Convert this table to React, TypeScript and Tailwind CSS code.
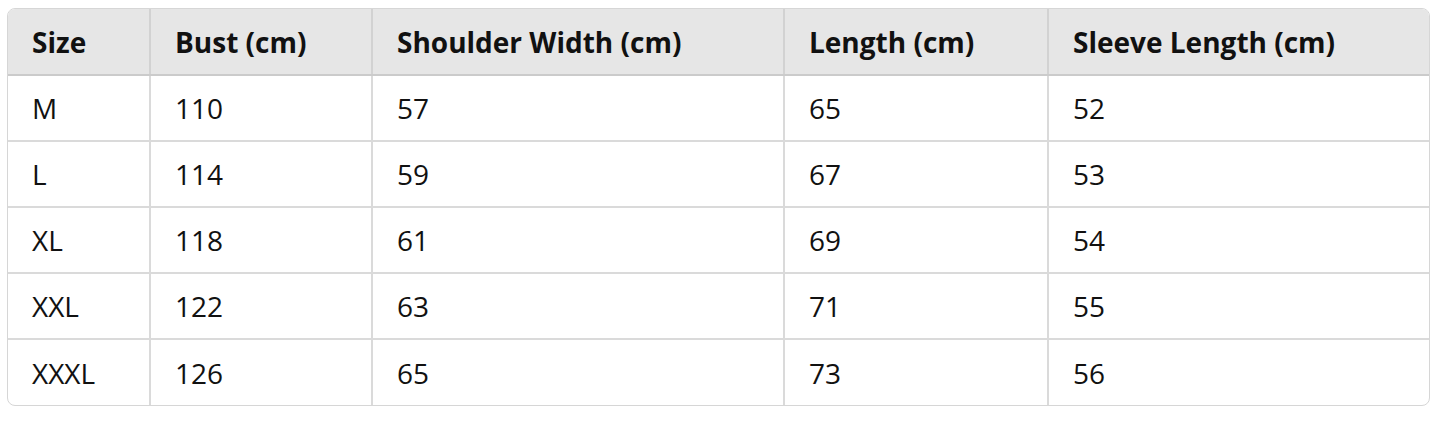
import React from "react";

const headers = ["Size", "Bust (cm)", "Shoulder Width (cm)", "Length (cm)", "Sleeve Length (cm)"];

const rows = [
  ["M", "110", "57", "65", "52"],
  ["L", "114", "59", "67", "53"],
  ["XL", "118", "61", "69", "54"],
  ["XXL", "122", "63", "71", "55"],
  ["XXXL", "126", "65", "73", "56"],
];

const widths = ["w-[142px]", "w-[222px]", "w-[412px]", "w-[264px]", "w-[382px]"];

export default function App() {
  return (
    <div className="min-h-screen bg-white pt-2 pl-[7px] font-['Open_Sans',sans-serif] text-[#111]">
      <div className="w-[1423px] rounded-lg border border-[#d6d6d6] overflow-hidden">
        <table className="w-full table-fixed border-collapse">
          <colgroup>
            {widths.map((w, i) => (
              <col key={i} className={w} />
            ))}
          </colgroup>
          <thead>
            <tr className="bg-[#e6e6e6] h-[66px]">
              {headers.map((h, i) => (
                <th
                  key={h}
                  className={`text-left font-bold text-[28px] leading-none px-6 border-b-2 border-[#cbcbcb] ${
                    i > 0 ? "border-l-2 border-l-[#d2d2d2]" : ""
                  }`}
                >
                  {h}
                </th>
              ))}
            </tr>
          </thead>
          <tbody>
            {rows.map((r, ri) => (
              <tr key={r[0]} className="h-[66px]">
                {r.map((c, i) => (
                  <td
                    key={i}
                    className={`px-6 text-[28px] leading-none ${ri > 0 ? "border-t-2 border-[#dadada]" : ""} ${
                      i > 0 ? "border-l-2 border-l-[#dadada]" : ""
                    }`}
                  >
                    {c}
                  </td>
                ))}
              </tr>
            ))}
          </tbody>
        </table>
      </div>
    </div>
  );
}
